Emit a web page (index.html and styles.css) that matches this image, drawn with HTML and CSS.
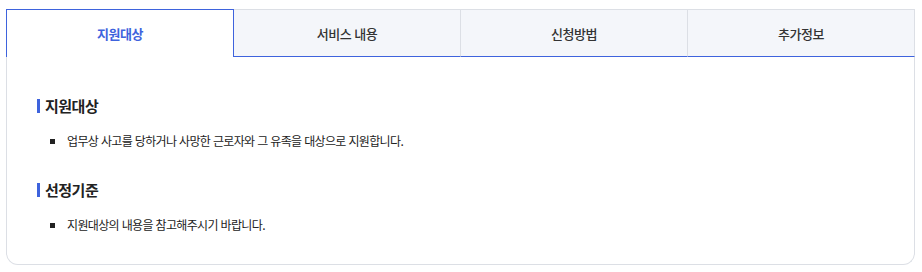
FILE: index.html
```html
<!DOCTYPE html>
<html lang="ko">
<head>
<meta charset="utf-8">
<link rel="stylesheet" href="styles.css">
</head>
<body>
<div class="wrap">
  <div class="tabs">
    <div class="tab active">지원대상</div>
    <div class="tab">서비스 내용</div>
    <div class="tab">신청방법</div>
    <div class="tab">추가정보</div>
  </div>
  <div class="panel">
    <section class="sec">
      <h3 class="title">지원대상</h3>
      <ul class="list">
        <li>업무상 사고를 당하거나 사망한 근로자와 그 유족을 대상으로 지원합니다.</li>
      </ul>
    </section>
    <section class="sec">
      <h3 class="title">선정기준</h3>
      <ul class="list">
        <li>지원대상의 내용을 참고해주시기 바랍니다.</li>
      </ul>
    </section>
  </div>
</div>
</body>
</html>
```
FILE: styles.css
```css
* { box-sizing: border-box; }
body {
  margin: 0;
  background: #fff;
  font-family: "Noto Sans CJK KR", "Noto Sans", sans-serif;
  color: #222;
}
.wrap {
  margin: 9px 7px 0 6px;
}
.tabs {
  display: flex;
  height: 48px;
}
.tab {
  flex: 1;
  display: flex;
  align-items: center;
  justify-content: center;
  background: #f4f6fa;
  border-top: 1px solid #dcdfe5;
  border-bottom: 1px solid #3e63dd;
  border-right: 1px solid #dcdfe5;
  font-size: 13px;
  font-weight: 500;
  color: #333;
  letter-spacing: -0.5px;
}
.tab.active {
  background: #fff;
  border: 1px solid #3e63dd;
  border-bottom: none;
  color: #3e63dd;
  font-weight: 700;
}
.panel {
  border: 1px solid #dcdfe5;
  border-top: none;
  border-radius: 0 0 12px 12px;
  padding: 40px 30px 0 30px;
  height: 208px;
}
.sec + .sec { margin-top: 31px; }
.title {
  margin: 0;
  font-size: 15px;
  font-weight: 700;
  color: #222;
  letter-spacing: -0.5px;
  line-height: 18px;
  display: flex;
  align-items: center;
}
.title::before {
  content: "";
  width: 3px;
  height: 14px;
  background: #3e63dd;
  margin-right: 5px;
}
.list {
  list-style: none;
  margin: 17px 0 0 0;
  padding: 0 0 0 13px;
}
.list li {
  font-size: 12px;
  line-height: 18px;
  color: #222;
  letter-spacing: -0.65px;
  display: flex;
  align-items: center;
}
.list li::before {
  content: "";
  width: 5px;
  height: 5px;
  background: #222;
  margin-right: 12px;
  flex: none;
}
```
